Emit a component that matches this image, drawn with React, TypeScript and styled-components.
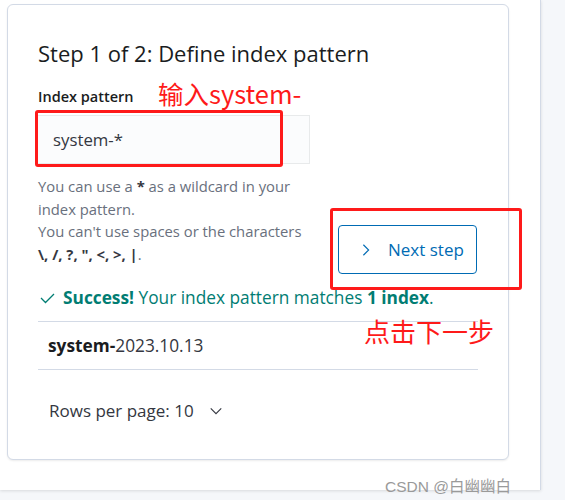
import React from 'react';
import styled, { createGlobalStyle } from 'styled-components';

const GlobalStyle = createGlobalStyle`
  * { box-sizing: border-box; }
  body {
    margin: 0;
    background: #f5f7fa;
    font-family: "Open Sans", "Noto Sans", sans-serif;
  }
`;

const Root = styled.div`
  position: relative;
  width: 565px;
  height: 500px;
  overflow: hidden;
  background: #f5f7fa;
`;

const Page = styled.div`
  width: 541px;
  height: 490px;
  padding: 4px 0 0 7px;
  background: #ffffff;
  border-right: 1px solid #d3dae6;
  box-shadow: 0 1px 3px rgba(0, 0, 0, 0.12);
`;

const Card = styled.div`
  width: 502px;
  height: 456px;
  padding: 34px 30px 0 30px;
  border: 1px solid #d3dae6;
  border-radius: 6px;
  background: #fff;
  box-shadow: 0 1px 2px rgba(0, 0, 0, 0.08);
`;

const Title = styled.h2`
  margin: 0;
  font-size: 22px;
  line-height: 28px;
  font-weight: 500;
  color: #1a1c21;
`;

const HeaderRow = styled.div`
  display: flex;
  justify-content: space-between;
  align-items: flex-end;
  margin-top: 21px;
`;

const FormColumn = styled.div`
  width: 272px;
  padding-bottom: 9px;
`;

const Label = styled.label`
  display: block;
  font-size: 14.5px;
  line-height: 18px;
  font-weight: 600;
  color: #1a1c21;
  margin-bottom: 9px;
`;

const Input = styled.div`
  height: 49px;
  margin-left: -1px;
  padding: 0 16px;
  display: flex;
  align-items: center;
  background: #fbfcfd;
  box-shadow: inset 0 0 0 1px rgba(16, 22, 26, 0.08);
  font-size: 16.8px;
  color: #343741;
`;

const Help = styled.div`
  margin-top: 11px;
  font-size: 14.8px;
  line-height: 22.5px;
  color: #69707d;
  white-space: nowrap;

  b {
    color: #343741;
    font-weight: 700;
  }
`;

const NextButton = styled.button`
  display: flex;
  align-items: center;
  gap: 15px;
  width: 139px;
  height: 49px;
  margin-right: 1px;
  padding: 0 0 0 20px;
  border: 1px solid #006bb4;
  border-radius: 4px;
  background: #fff;
  color: #006bb4;
  font-family: inherit;
  font-size: 17px;
`;

const Callout = styled.div`
  display: flex;
  align-items: center;
  gap: 8px;
  margin-top: 13px;
  padding-left: 2px;
  font-size: 17.3px;
  line-height: 22px;
  color: #017d73;

  b { font-weight: 700; }
`;

const Table = styled.div`
  margin-top: 12px;
  border-top: 1px solid #d3dae6;
`;

const Row = styled.div`
  height: 48px;
  display: flex;
  align-items: center;
  padding-left: 10px;
  border-bottom: 1px solid #d3dae6;
  font-size: 17.3px;
  color: #343741;

  b { color: #1a1c21; font-weight: 700; }
`;

const Pagination = styled.div`
  display: flex;
  align-items: center;
  gap: 15px;
  margin-top: 30px;
  padding-left: 11px;
  font-size: 17px;
  line-height: 22px;
  color: #343741;
`;

const Mark = styled.div<{ $x: number; $y: number; $w: number; $h: number }>`
  position: absolute;
  left: ${(p) => p.$x}px;
  top: ${(p) => p.$y}px;
  width: ${(p) => p.$w}px;
  height: ${(p) => p.$h}px;
  border: 3px solid #fe1a1a;
  border-radius: 3px;
`;

const Note = styled.div<{ $x: number; $y: number; $size: number }>`
  position: absolute;
  left: ${(p) => p.$x}px;
  top: ${(p) => p.$y}px;
  font-family: "Noto Sans CJK SC", "Open Sans", sans-serif;
  font-size: ${(p) => p.$size}px;
  line-height: 1;
  color: #fe1a1a;
  white-space: nowrap;
`;

const Watermark = styled.div`
  position: absolute;
  left: 385px;
  top: 474px;
  font-family: "Liberation Sans", "Noto Sans CJK SC", sans-serif;
  font-size: 15.5px;
  color: #9a9a9a;
  white-space: nowrap;
`;

const Chevron = ({ dir }: { dir: 'right' | 'down' }) => (
  <svg width="14" height="14" viewBox="0 0 16 16" fill="none">
    <polyline
      points={dir === 'right' ? '5,2 11,8 5,14' : '2,5 8,11 14,5'}
      stroke="currentColor"
      strokeWidth="1.3"
    />
  </svg>
);

const Check = () => (
  <svg width="15" height="12" viewBox="0 0 15 12" fill="none">
    <polyline points="1,6 5.5,10.5 14,2" stroke="#017d73" strokeWidth="1.3" />
  </svg>
);

export default function App() {
  return (
    <Root>
      <GlobalStyle />
      <Page>
        <Card>
          <Title>Step 1 of 2: Define index pattern</Title>
          <HeaderRow>
            <FormColumn>
              <Label>Index pattern</Label>
              <Input>system-*</Input>
              <Help>
                <div>
                  You can use a <b>*</b> as a wildcard in your
                </div>
                <div>index pattern.</div>
                <div>You can't use spaces or the characters</div>
                <div>
                  <b>\, /, ?, ", &lt;, &gt;, |</b>.
                </div>
              </Help>
            </FormColumn>
            <NextButton>
              <Chevron dir="right" />
              Next step
            </NextButton>
          </HeaderRow>
          <Callout>
            <Check />
            <span>
              <b>Success!</b> Your index pattern matches <b>1 index</b>.
            </span>
          </Callout>
          <Table>
            <Row>
              <b>system-</b>2023.10.13
            </Row>
          </Table>
          <Pagination>
            Rows per page: 10
            <Chevron dir="down" />
          </Pagination>
        </Card>
      </Page>
      <Note $x={158} $y={80} $size={25.5}>输入system-</Note>
      <Mark $x={35} $y={110} $w={248} $h={57} />
      <Mark $x={330} $y={208} $w={192} $h={82} />
      <Note $x={364} $y={318} $size={26}>点击下一步</Note>
      <Watermark>CSDN @白幽幽白</Watermark>
    </Root>
  );
}
